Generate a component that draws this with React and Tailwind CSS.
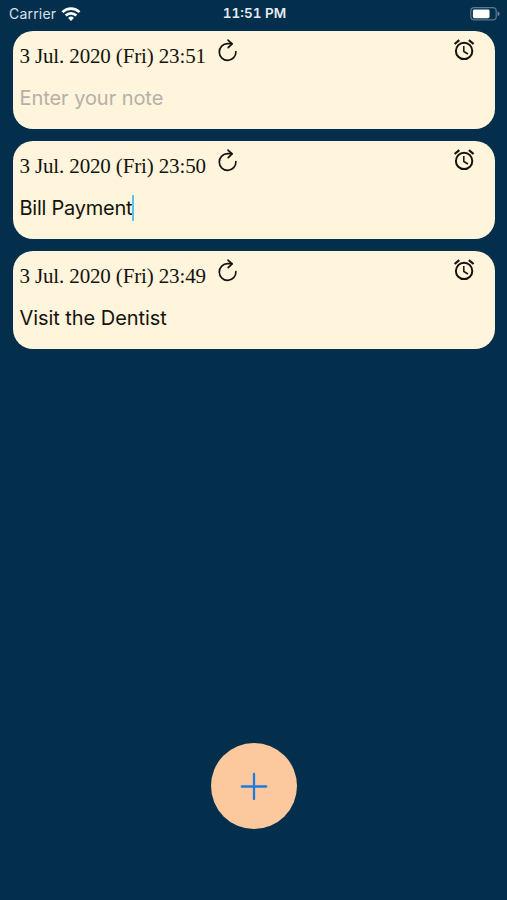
import React, { useState } from "react";

const initialNotes = [
  { id: 3, date: "3 Jul. 2020 (Fri) 23:51", text: "" },
  { id: 2, date: "3 Jul. 2020 (Fri) 23:50", text: "Bill Payment" },
  { id: 1, date: "3 Jul. 2020 (Fri) 23:49", text: "Visit the Dentist" },
];

const WifiIcon = () => (
  <svg width="20" height="16" viewBox="0 0 20 16" fill="none" stroke="#fff" strokeWidth="2.7">
    <path d="M1.5 6.1a12.2 12.2 0 0 1 17 0" />
    <path d="M4.7 9.5a7.6 7.6 0 0 1 10.6 0" />
    <path d="M10 15l-2.9-3a4.1 4.1 0 0 1 5.8 0z" fill="#fff" stroke="none" />
  </svg>
);

const BatteryIcon = () => (
  <svg width="30" height="14" viewBox="0 0 30 14">
    <rect x="0.8" y="0.6" width="25.4" height="12.2" rx="3.4" fill="none" stroke="#5f788d" strokeWidth="1.2" />
    <rect x="2.9" y="2.4" width="16.6" height="8.8" rx="1.4" fill="#fff" />
    <path d="M27.6 4.2c2.6.9 2.6 4.1 0 5z" fill="#71879a" />
  </svg>
);

const RepeatIcon = () => (
  <svg width="22" height="26" viewBox="0 0 22 26" fill="none" stroke="#15130d" strokeWidth="1.7" strokeLinecap="round" strokeLinejoin="round">
    <path d="M18.9 13.6a8.3 8.3 0 1 1-8.3-7.9h4.3" />
    <path d="M11 2.1l4.1 3.7-3.9 3.9" />
  </svg>
);

const AlarmIcon = () => (
  <svg width="24" height="24" viewBox="0 0 24 24" fill="none" stroke="#15130d" strokeWidth="2">
    <circle cx="12.1" cy="12.9" r="8.2" />
    <path d="M2.6 6l4.7-3.8M21.6 6l-4.7-3.8" strokeWidth="2.2" />
    <path d="M11.8 8v5.5l4.2 2.5" strokeWidth="1.5" />
  </svg>
);

const NoteCard = ({ note, active }) => (
  <div className="h-[98px] rounded-[20px] bg-[#fff4dc] pl-[6.5px] pr-[19px]">
    <div className="flex h-[50px] items-start">
      <span className="mt-3 w-[197.5px] whitespace-nowrap font-['Liberation_Serif',serif] text-[21px] leading-[26px] tracking-[-0.14px] text-[#15130d]">
        {note.date}
      </span>
      <button className="mt-[7px]">
        <RepeatIcon />
      </button>
      <button className="ml-auto mt-[7px]">
        <AlarmIcon />
      </button>
    </div>

    <div
      className={`flex h-[34px] items-center text-[20px] ${
        active ? "tracking-[-0.24px]" : "tracking-[-0.06px]"
      }`}
    >
      {note.text ? (
        <span className="text-[#15130d]">{note.text}</span>
      ) : (
        <span className="text-[#b5b0a8]">Enter your note</span>
      )}
      {active && <span className="h-[26px] w-0.5 bg-[#55c3ee]"></span>}
    </div>
  </div>
);

const App = () => {
  const [notes, setNotes] = useState(initialNotes);
  const [activeId] = useState(2);

  const addNote = () => {
    setNotes([{ id: notes.length + 1, date: notes[0].date, text: "" }, ...notes]);
  };

  return (
    <div className="flex h-screen flex-col bg-[#032f4d] font-[Inter,sans-serif]">
      {/* Status bar */}
      <div className="grid h-[31px] grid-cols-3 items-start pl-[9px] pr-[7px] pt-[3px]">
        <div className="flex items-center gap-[5px] text-[14px] leading-[21px] tracking-[0.2px] text-[#d9e1e8]">
          <span>Carrier</span>
          <WifiIcon />
        </div>
        <span className="text-center text-[13.5px] font-semibold tabular-nums leading-[21px] text-[#e6ecf1]">
          11:51 PM
        </span>
        <div className="flex justify-end pt-1">
          <BatteryIcon />
        </div>
      </div>

      {/* Notes */}
      <div className="flex flex-1 flex-col gap-3 pl-[13px] pr-3">
        {notes.map((note) => (
          <NoteCard key={note.id} note={note} active={note.id === activeId} />
        ))}
      </div>

      {/* Add button */}
      <div className="flex justify-center pb-[71px]">
        <button
          onClick={addNote}
          className="flex h-[86px] w-[86px] items-center justify-center rounded-full bg-[#fbc99d]"
        >
          <svg width="28" height="28" viewBox="0 0 28 28" stroke="#1f7be0" strokeWidth="2.3" strokeLinecap="round">
            <path d="M14 2v25M1.8 14.5h24.4" />
          </svg>
        </button>
      </div>
    </div>
  );
};

export default App;
